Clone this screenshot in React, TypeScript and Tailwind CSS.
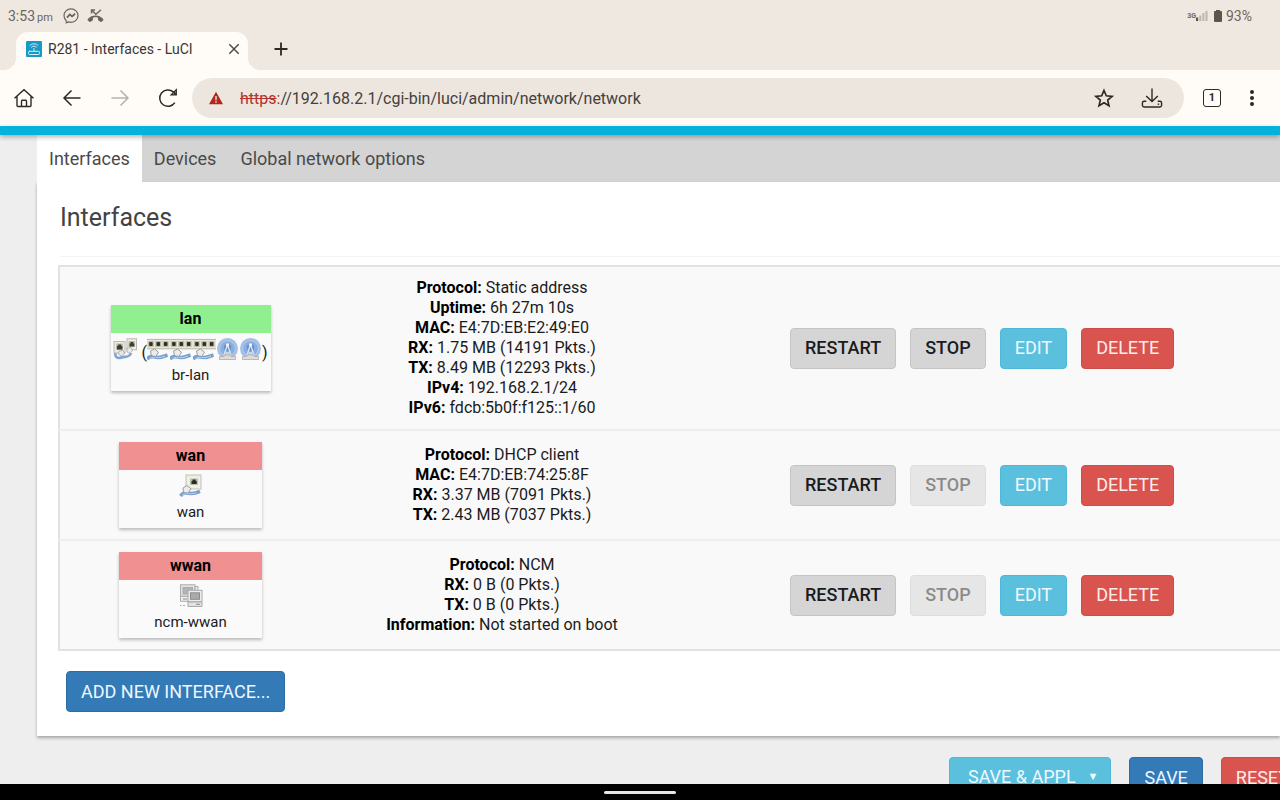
import { useState } from 'react'
import type { ReactNode } from 'react'

type Line = { label: string; value: string }

type Network = {
  name: string
  device: string
  up: boolean
  kind: 'bridge' | 'ethernet' | 'modem'
  lines: Line[]
}

const networks: Network[] = [
  {
    name: 'lan',
    device: 'br-lan',
    up: true,
    kind: 'bridge',
    lines: [
      { label: 'Protocol', value: 'Static address' },
      { label: 'Uptime', value: '6h 27m 10s' },
      { label: 'MAC', value: 'E4:7D:EB:E2:49:E0' },
      { label: 'RX', value: '1.75 MB (14191 Pkts.)' },
      { label: 'TX', value: '8.49 MB (12293 Pkts.)' },
      { label: 'IPv4', value: '192.168.2.1/24' },
      { label: 'IPv6', value: 'fdcb:5b0f:f125::1/60' },
    ],
  },
  {
    name: 'wan',
    device: 'wan',
    up: false,
    kind: 'ethernet',
    lines: [
      { label: 'Protocol', value: 'DHCP client' },
      { label: 'MAC', value: 'E4:7D:EB:74:25:8F' },
      { label: 'RX', value: '3.37 MB (7091 Pkts.)' },
      { label: 'TX', value: '2.43 MB (7037 Pkts.)' },
    ],
  },
  {
    name: 'wwan',
    device: 'ncm-wwan',
    up: false,
    kind: 'modem',
    lines: [
      { label: 'Protocol', value: 'NCM' },
      { label: 'RX', value: '0 B (0 Pkts.)' },
      { label: 'TX', value: '0 B (0 Pkts.)' },
      { label: 'Information', value: 'Not started on boot' },
    ],
  },
]

const pageTabs = ['Interfaces', 'Devices', 'Global network options']

// Status bar icons

function MessengerIcon() {
  return (
    <svg className="size-4" viewBox="0 0 16 16" fill="none" stroke="#6b655e">
      <path
        d="M8 .9C4 .9 1 3.8 1 7.6c0 2 .8 3.8 2.200 5l.1 2.300 2.200-1c.8.2 1.600.4 2.500.4 4 0 7-2.900 7-6.700S12 .9 8 .9z"
        strokeWidth="1.2"
      />
      <path d="M3.900 9.600 6.800 6.500l2.300 1.900 3-2.600" strokeWidth="1.800" />
    </svg>
  )
}

function MissedCallIcon() {
  return (
    <svg className="h-4 w-[17px]" viewBox="0 0 17 16" fill="none">
      <path
        d="M.8 12.300c-.4-.5-.4-1 0-1.400 4.200-4.600 11.200-4.600 15.400 0 .4.400.4.900 0 1.400l-1.500 1.500c-.4.300-.9.300-1.300 0l-1.900-1.400c-.4-.3-.5-.6-.5-1V9.700c-1.600-.6-3.400-.6-5 0v1.700c0 .4-.1.7-.5 1l-1.900 1.400c-.4.300-.9.300-1.300 0z"
        fill="#6b655e"
      />
      <path
        d="M4.500 5.500V2h3.600M4.900 2.400l4 3.900L14 1.800"
        stroke="#6b655e"
        strokeWidth="1.400"
      />
    </svg>
  )
}

function SignalIcon() {
  return (
    <svg className="h-3 w-3" viewBox="0 0 12 12">
      <rect x="0" y="7.500" width="2.200" height="3.500" fill="#5b554e" />
      <rect x="3.300" y="5.500" width="2" height="5.500" fill="#bdb6ad" />
      <rect x="6.400" y="3" width="2" height="8" fill="#bdb6ad" />
      <rect x="9.500" y="1" width="2" height="10" fill="#bdb6ad" />
    </svg>
  )
}

function BatteryIcon() {
  return (
    <svg className="h-3 w-2" viewBox="0 0 8 12" fill="#5b554e">
      <rect x="2" y="0" width="4" height="2" />
      <rect x="0" y="1" width="8" height="11" rx="1" />
    </svg>
  )
}

// Browser icons

function RouterFavicon() {
  return (
    <svg className="size-4 shrink-0" viewBox="0 0 16 16" fill="none">
      <rect width="16" height="16" rx="1" fill="#159bc6" />
      <g stroke="#d9f2fa" strokeLinecap="round">
        <path d="M4 4.300c2.300-2 5.700-2 8 0M5.500 6.100c1.500-1.200 3.500-1.200 5 0M8 7.500V10" strokeWidth=".9" />
        <rect x="2.500" y="10.300" width="11" height="3.200" rx="1" strokeWidth="1" />
      </g>
    </svg>
  )
}

function HomeIcon() {
  return (
    <svg className="size-6" viewBox="0 0 24 24" fill="none" stroke="#2b2825" strokeWidth="1.400">
      <path d="M2.500 12.200 12 3.700l9.500 8.500M5 10.300v9.100c0 .7.400 1.100 1.100 1.100h11.800c.7 0 1.100-.4 1.100-1.100v-9.100" />
      <path d="M9.500 20.500v-5.300c0-.6.300-.9.900-.9h3.200c.6 0 .9.300.9.900v5.300" />
    </svg>
  )
}

function BackIcon() {
  return (
    <svg className="size-6" viewBox="0 0 24 24" fill="none" stroke="currentColor" strokeWidth="1.500">
      <path d="M20.500 12H4M11.500 4.500 4 12l7.500 7.500" />
    </svg>
  )
}

function ForwardIcon() {
  return (
    <svg className="size-6" viewBox="0 0 24 24" fill="none" stroke="currentColor" strokeWidth="1.500">
      <path d="M3.500 12H20M12.500 4.500 20 12l-7.500 7.500" />
    </svg>
  )
}

function ReloadIcon() {
  return (
    <svg className="size-6" viewBox="0 0 24 24" fill="none" stroke="#2b2825" strokeWidth="1.500">
      <path d="M18.800 16.600A8.200 8.200 0 1 1 17.300 5.900l2.500 2.500" />
      <path d="M20.300 3.600v5.200h-5.200z" fill="#2b2825" fillOpacity=".35" strokeWidth="1.200" />
    </svg>
  )
}

function WarningIcon() {
  return (
    <svg className="size-4 shrink-0" viewBox="0 0 16 16">
      <path d="M8 1.800 15 14.200H1z" fill="#b3261e" />
      <path d="M8 6v4.200M8 11.300v1.500" stroke="#f0e4dc" strokeWidth="1.400" />
    </svg>
  )
}

function StarIcon() {
  return (
    <svg className="size-6" viewBox="0 0 24 24" fill="none" stroke="#2b2825" strokeWidth="1.700">
      <path d="m12 4.500 2.300 5.300 5.800.5-4.400 3.800 1.300 5.600-5-3-5 3 1.300-5.600-4.400-3.800 5.800-.5z" />
    </svg>
  )
}

function DownloadIcon() {
  return (
    <svg className="size-6" viewBox="0 0 24 24" fill="none" stroke="#2b2825" strokeWidth="1.400">
      <path d="M12 2.500v12.700M6.200 10l5.800 5.600 5.800-5.600" />
      <path d="M6.300 15.300H4.100c-1.100 0-1.700.6-1.700 1.700v2.300c0 1.100.6 1.700 1.700 1.700h15.800c1.100 0 1.700-.6 1.700-1.700V17c0-1.100-.6-1.700-1.700-1.700h-2.200" />
      <path d="M17.700 18.200h1.500" />
    </svg>
  )
}

// Network device icons

function PortIcon() {
  return (
    <svg className="h-6 w-6" viewBox="0 0 24 24">
      <rect x="7" y="1" width="15" height="14" fill="#f0eee6" stroke="#c2bfb6" />
      <rect x="11" y="4.500" width="8" height="6.500" fill="#b9c0a6" />
      <path d="M12.500 10V7h1V5.500h3.200V7h1v3z" fill="#2b2a26" />
      <path
        d="M1.500 22c3-4.500 6.500-3 10-2.600 3.500.3 6-.6 9.500-2.100"
        fill="none"
        stroke="#7c9fd0"
        strokeWidth="3.600"
      />
      <path d="m3 21.300 3.500-2 5 .6 6-1" fill="none" stroke="#b8cdea" strokeWidth="1" />
      <path d="m4 14 4-2.500 4 3.300-3.300 4.400-4.200-1z" fill="#ececea" stroke="#8f9599" strokeWidth=".9" />
    </svg>
  )
}

function SwitchIcon() {
  return (
    <svg className="h-[23px] w-[23px] shrink-0" viewBox="0 0 23 23">
      <rect x="0" y="1" width="23" height="10" fill="#e8e5da" />
      <path d="M0 1.400h23M0 10.800h23" stroke="#b5b1a4" strokeWidth=".9" />
      {[0.800, 8.200, 15.600].map((x) => (
        <g key={x}>
          <rect x={x} y="3" width="6" height="6" fill="#bcc2a8" />
          <rect x={x + 1.300} y="4" width="3.600" height="4" rx="1" fill="#33312b" />
        </g>
      ))}
      <path
        d="M0 21c3-3.700 6-2.400 9.500-1.700 4 .7 6-.6 11-2.300"
        fill="none"
        stroke="#78a0d2"
        strokeWidth="3.600"
      />
      <path d="m2.500 20.500 4.500-1.500 5 .7 6-1.500" fill="none" stroke="#bdd1eb" strokeWidth="1" />
      <path d="m3.500 13 4-2 4 3.200-2.700 4.300-4.300-.8z" fill="#ececea" stroke="#8f9599" strokeWidth=".9" />
    </svg>
  )
}

function WifiIcon() {
  return (
    <svg className="h-[23px] w-[23px] shrink-0" viewBox="0 0 23 23">
      <circle cx="11.500" cy="10.500" r="10.500" fill="#a4bfe6" />
      <circle cx="11.500" cy="10.500" r="7.800" fill="#8aaee0" stroke="#b3caeb" strokeWidth="1" />
      <circle cx="11.500" cy="9.500" r="4.300" fill="#6691cf" stroke="#94b5e2" strokeWidth=".8" />
      <path d="m11.300 7-3.800 12M11.700 7l3.800 12" fill="none" stroke="#dde6f2" strokeWidth="1.300" />
      <path d="M9.500 14h4v3h-4z" fill="#c9d6e8" />
      <circle cx="11.500" cy="6.800" r="1.600" fill="#f8f8f6" />
      <path d="M3.500 18.500h4.500V17h7v1.500h4.500v3h-16z" fill="#dddcd6" stroke="#a5a49f" strokeWidth=".7" />
    </svg>
  )
}

function BridgeIcon() {
  return (
    <svg className="h-[23px] w-6 shrink-0" viewBox="0 0 24 23">
      <path
        d="M3 14c-2 4 1 7 5.500 5.500 4-1.300 8 .5 9.500-4.500"
        fill="none"
        stroke="#7fa4d2"
        strokeWidth="2.600"
      />
      <rect x="14" y=".8" width="9.500" height="11" fill="#eeece5" stroke="#bcb9b1" />
      <rect x="1" y="3.500" width="11" height="11.500" fill="#eeece5" stroke="#bcb9b1" />
      <rect x="3" y="5.500" width="7" height="6.500" fill="#b9c0a6" />
      <rect x="15.500" y="3" width="6.500" height="6" fill="#b9c0a6" />
      <path d="M4 11.500V8h1.200V6.500h3V8h1.200v3.500zM16.500 8.500V5.500h1V4h2.800v1.500h1v3z" fill="#3d3c34" />
      <path d="m6 13 4-.5 1.500 3-3 2.500-3-1.500zM14 10l4-.5 1.500 3-2.500 3-3-1.500z" fill="#e9e9e7" stroke="#999b9c" strokeWidth=".7" />
    </svg>
  )
}

function ModemIcon() {
  return (
    <svg className="h-[24px] w-6" viewBox="0 0 24 24" stroke="#aaa" strokeWidth="1">
      <rect x="1.500" y=".8" width="14.500" height="11.500" fill="#e5e5e5" />
      <rect x="4" y="3.500" width="9.500" height="6.500" fill="#b4b4b4" />
      <path d="M1.500 12.300H13v5H1.500zM16 2.500h3v4h-3z" fill="#ededed" />
      <rect x="9" y="6.300" width="14" height="11.500" fill="#ededed" />
      <rect x="11.500" y="8.800" width="9" height="6.500" fill="#aaa" stroke="#8c8c8c" />
      <path d="M9 18h14v4.500H9z" fill="#e2e2e2" />
      <path d="M17 20.300h4M4 15h4" stroke="#8c8c8c" />
      <path d="M1 21.500h1.500m1.500 0h2" />
    </svg>
  )
}

function DeviceIcons({ kind }: { kind: Network['kind'] }) {
  if (kind === 'ethernet') return <PortIcon />
  if (kind === 'modem') return <ModemIcon />
  return (
    <>
      <BridgeIcon />
      <span className="ml-1 pt-2 text-base leading-6">(</span>
      <SwitchIcon />
      <SwitchIcon />
      <SwitchIcon />
      <WifiIcon />
      <WifiIcon />
      <span className="pt-2 text-base leading-6">)</span>
    </>
  )
}

const tones = {
  neutral: 'border-[#c4c4c4] bg-[#d5d5d5] font-medium text-[#1b1b1b]',
  info: 'border-[#4fb8d8] bg-[#5bc0de] text-[#eefaff]',
  danger: 'border-[#cf4c48] bg-[#d9534f] text-[#fdeceb]',
  primary: 'border-[#2e6da4] bg-[#337ab7] text-[#eef7ff]',
}

function ActionButton({
  tone,
  disabled,
  children,
}: {
  tone: keyof typeof tones
  disabled?: boolean
  children: ReactNode
}) {
  return (
    <button
      type="button"
      disabled={disabled}
      className={`flex h-[41px] shrink-0 items-center rounded border px-3.5 text-lg leading-6 whitespace-nowrap uppercase disabled:opacity-50 ${tones[tone]}`}
    >
      {children}
    </button>
  )
}

function NetworkRow({ network }: { network: Network }) {
  return (
    <tr className="border-b-2 border-[#eeeeee] last:border-b-0">
      <td className="w-[262px] py-[11px] align-middle">
        <div
          className={`mx-auto bg-[#fafafa] text-center shadow-[0_2px_3px_rgba(0,0,0,0.25)] ${
            network.kind === 'bridge' ? 'w-40' : 'w-[143px]'
          }`}
        >
          <div
            className={`h-7 text-base leading-7 font-bold text-black ${
              network.up ? 'bg-[#90f090]' : 'bg-[#f09090]'
            }`}
          >
            {network.name}
          </div>
          <div className="flex h-8 items-center justify-center">
            <DeviceIcons kind={network.kind} />
          </div>
          <div className="h-[26px] text-[15px] leading-5">{network.device}</div>
        </div>
      </td>
      <td className="w-[362px] py-[11px] text-center align-middle text-base leading-5">
        {network.lines.map((line) => (
          <div key={line.label}>
            <strong className="font-bold text-black">{line.label}:</strong> {line.value}
          </div>
        ))}
      </td>
      <td className="py-2.5 pl-[107px] align-middle">
        <div className="flex gap-3.5">
          <ActionButton tone="neutral">Restart</ActionButton>
          <ActionButton tone="neutral" disabled={!network.up}>
            Stop
          </ActionButton>
          <ActionButton tone="info">Edit</ActionButton>
          <ActionButton tone="danger">Delete</ActionButton>
        </div>
      </td>
    </tr>
  )
}

function StatusBar() {
  return (
    <div className="flex h-8 items-center pr-7 pl-2 text-sm text-[#6b655e]">
      <span>
        3:53<span className="ml-0.5 text-[11px]">pm</span>
      </span>
      <div className="ml-2.5 flex items-center gap-2">
        <MessengerIcon />
        <MissedCallIcon />
      </div>
      <div className="ml-auto flex items-center">
        <span className="text-[7px] font-bold">3G</span>
        <SignalIcon />
        <span className="mr-1 ml-1.5">
          <BatteryIcon />
        </span>
        <span>93%</span>
      </div>
    </div>
  )
}

function TabBar() {
  return (
    <div className="flex h-[38px] items-stretch pl-4">
      <div className="relative flex w-[232px] items-center rounded-t-xl bg-[#fffcf8] pr-2 pb-1 pl-2.5">
        <span className="absolute bottom-0 -left-3 size-3 bg-[radial-gradient(circle_at_top_left,transparent_12px,#fffcf8_12px)]" />
        <span className="absolute -right-3 bottom-0 size-3 bg-[radial-gradient(circle_at_top_right,transparent_12px,#fffcf8_12px)]" />
        <RouterFavicon />
        <span className="ml-1.5 text-sm text-[#3a3632]">R281 - Interfaces - LuCI</span>
        <button type="button" aria-label="Close tab" className="ml-auto text-[#4a4540]">
          <svg className="size-3" viewBox="0 0 12 12" stroke="currentColor" strokeWidth="1.400">
            <path d="m1.300 1.300 9.400 9.400m0-9.400-9.400 9.400" />
          </svg>
        </button>
      </div>
      <button type="button" aria-label="New tab" className="ml-[26px] pb-1 text-[#2b2825]">
        <svg className="size-[14px]" viewBox="0 0 14 14" stroke="currentColor" strokeWidth="1.800">
          <path d="M7 .5v13M.5 7h13" />
        </svg>
      </button>
    </div>
  )
}

function Toolbar() {
  const [url, setUrl] = useState('//192.168.2.1/cgi-bin/luci/admin/network/network')

  return (
    <div className="flex h-14 items-center bg-[#fffcf8] pr-4 pl-3 text-[#2b2825]">
      <div className="flex shrink-0 gap-6">
        <button type="button" aria-label="Home">
          <HomeIcon />
        </button>
        <button type="button" aria-label="Back">
          <BackIcon />
        </button>
        <button type="button" aria-label="Forward" disabled className="text-[#b5b0aa]">
          <ForwardIcon />
        </button>
        <button type="button" aria-label="Reload">
          <ReloadIcon />
        </button>
      </div>
      <div className="ml-3 flex h-10 min-w-0 flex-1 items-center rounded-full bg-[#ede6df] pr-5 pl-4 text-base">
        <WarningIcon />
        <label htmlFor="url" className="ml-4 pt-0.5 text-[#b3322b]">
          <span className="line-through">https</span>:
        </label>
        <input
          id="url"
          value={url}
          onChange={(e) => setUrl(e.target.value)}
          className="min-w-0 flex-1 bg-transparent pt-0.5 text-[#45403b] outline-none"
        />
        <button type="button" aria-label="Bookmark">
          <StarIcon />
        </button>
        <button type="button" aria-label="Downloads" className="ml-6">
          <DownloadIcon />
        </button>
      </div>
      <button
        type="button"
        aria-label="Open tabs"
        className="ml-[19px] size-[18px] rounded-[3px] border border-[#2b2825] text-[11px] leading-4 font-bold"
      >
        1
      </button>
      <button type="button" aria-label="Menu" className="ml-[19px]">
        <svg className="size-6" viewBox="0 0 24 24" fill="currentColor">
          <circle cx="12" cy="6" r="2" />
          <circle cx="12" cy="12" r="2" />
          <circle cx="12" cy="18" r="2" />
        </svg>
      </button>
    </div>
  )
}

export default function App() {
  const [activeTab, setActiveTab] = useState('Interfaces')

  return (
    <div className="flex h-screen flex-col overflow-hidden bg-[#efe8e0] font-['Roboto',sans-serif]">
      <header className="shrink-0">
        <StatusBar />
        <TabBar />
        <Toolbar />
      </header>

      <div className="z-10 h-[9px] shrink-0 bg-[#06b2dc] shadow-[0_2px_5px_rgba(0,0,0,0.3)]" />

      <main className="min-h-0 flex-1 overflow-hidden bg-[#eeeeee] pl-[37px] text-[#1b1b1b]">
        <nav className="flex h-[47px] bg-[#d4d4d4] text-lg text-[#4a4a4a]">
          {pageTabs.map((tab) => (
            <button
              key={tab}
              type="button"
              onClick={() => setActiveTab(tab)}
              className={tab === activeTab ? 'bg-white px-3' : 'px-3'}
            >
              {tab}
            </button>
          ))}
        </nav>

        <section className="bg-white pb-6 pl-[21px] shadow-[0_2px_3px_rgba(0,0,0,0.3)]">
          <h1 className="ml-0.5 h-[75px] border-b border-[#f3f3f3] pt-5 text-[25px] leading-8 text-[#434343]">
            Interfaces
          </h1>
          <table className="mt-2 w-full table-fixed border-collapse border-y-2 border-l-2 border-[#e2e2e2] bg-[#f9f9f9]">
            <tbody>
              {networks.map((network) => (
                <NetworkRow key={network.name} network={network} />
              ))}
            </tbody>
          </table>
          <div className="mt-5 ml-2 flex">
            <ActionButton tone="primary">Add new interface...</ActionButton>
          </div>
        </section>

        {/* actions run past the right edge of the window */}
        <div className="mt-[21px] -mr-6 flex justify-end gap-[18px]">
          <button
            type="button"
            className="flex h-[41px] shrink-0 items-center rounded border border-[#4fb8d8] bg-[#5bc0de] pr-3 pb-0.5 pl-[18px] text-lg leading-6 text-[#eefaff]"
          >
            SAVE &amp; APPL
            <span className="ml-3 text-[11px]">▼</span>
          </button>
          <ActionButton tone="primary">Save</ActionButton>
          <ActionButton tone="danger">Reset</ActionButton>
        </div>
      </main>

      <footer className="flex h-4 shrink-0 items-center justify-center bg-black">
        <div className="h-[3px] w-[72px] rounded-full bg-[#e6e6e6]" />
      </footer>
    </div>
  )
}
